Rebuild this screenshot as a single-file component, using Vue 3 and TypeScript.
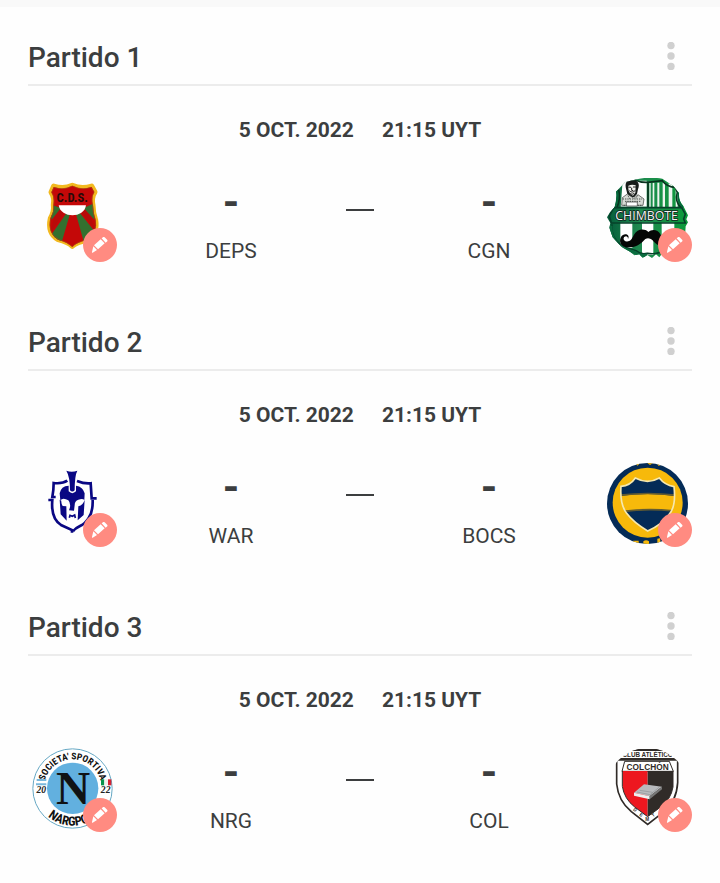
<script setup lang="ts">
interface Side {
  code: string
  crest: string
  score: string
}

interface Match {
  id: number
  date: string
  time: string
  home: Side
  away: Side
}

const matches: Match[] = [
  {
    id: 1,
    date: '5 OCT. 2022',
    time: '21:15 UYT',
    home: { code: 'DEPS', crest: 'deps', score: '-' },
    away: { code: 'CGN', crest: 'cgn', score: '-' },
  },
  {
    id: 2,
    date: '5 OCT. 2022',
    time: '21:15 UYT',
    home: { code: 'WAR', crest: 'war', score: '-' },
    away: { code: 'BOCS', crest: 'bocs', score: '-' },
  },
  {
    id: 3,
    date: '5 OCT. 2022',
    time: '21:15 UYT',
    home: { code: 'NRG', crest: 'nrg', score: '-' },
    away: { code: 'COL', crest: 'col', score: '-' },
  },
]

const sides = ['home', 'away'] as const
</script>

<template>
  <main class="fixtures">
    <section v-for="match in matches" :key="match.id" class="match">
      <header class="match-header">
        <h2 class="title">Partido {{ match.id }}</h2>
        <button type="button" class="menu" aria-label="Opciones">
          <svg viewBox="0 0 8 28" class="dots" aria-hidden="true">
            <circle cx="4" cy="3.5" r="3.7" />
            <circle cx="4" cy="14" r="3.7" />
            <circle cx="4" cy="24.5" r="3.7" />
          </svg>
        </button>
      </header>

      <p class="schedule">
        <time>{{ match.date }}</time>
        <time>{{ match.time }}</time>
      </p>

      <div class="board">
        <div v-for="side in sides" :key="side" class="crest-cell" :class="side">
          <svg v-if="match[side].crest === 'deps'" class="crest" viewBox="21 39 243 243" aria-hidden="true">
            <defs>
              <clipPath id="deps-shield">
                <path d="M86 66 Q115 76 142 62 Q170 76 200 66 L208 81 Q198 97 204 121 Q204 143 212 165 Q219 203 188 225 Q154 232 142 246 Q129 232 99 224 Q66 204 76 160 Q88 140 85 120 Q89 96 79 82Z" />
              </clipPath>
            </defs>
            <path fill="#f2b91f" stroke="#f2b91f" stroke-width="15" stroke-linejoin="round" d="M86 63 Q115 73 142 61 Q170 73 200 63 L210 81 Q199 97 204 121 Q204 143 212 165 Q219 203 188 225 Q154 232 142 244 Q129 232 99 224 Q66 204 76 160 Q88 140 85 120 Q89 96 78 82Z" />
            <g clip-path="url(#deps-shield)">
              <path fill="#c40808" d="M60 50h170v210H60z" />
              <path fill="#33702f" d="M70 116 L108 129 L80 164Z M204 116 L176 129 L208 164Z M123 146 L80 208 L85 240 L110 232 L134 150Z M153 148 L178 236 L218 210 L164 143Z" />
              <path fill="#8b1910" d="M88 155 L105 132 L118 140 L75 207Z M196 155 L180 132 L168 140 L214 200Z" opacity=".2" />
              <path fill="#fff" d="M101 121h82c-5 40-76 40-82 0z" />
            </g>
            <path fill="none" stroke="#a84a12" stroke-width="2" d="M87 67 Q115 77 142 63 Q170 77 198 67 L207 81 Q197 97 203 121 Q203 143 211 165 Q218 202 187 224 Q154 231 142 245 Q129 231 100 223 Q67 204 77 160 Q89 140 86 120 Q90 96 80 82Z" />
            <text class="deps-text" x="142" y="111" text-anchor="middle">C.D.S.</text>
          </svg>

          <svg v-else-if="match[side].crest === 'cgn'" class="crest" viewBox="36 39 243 243" aria-hidden="true">
            <defs>
              <clipPath id="cgn-shape">
                <path d="M119 44 Q158 34 202 41 L235 63 L252 84 Q250 106 265 123 L279 151 L274 163 L279 172 L272 184 L270 214 L250 246 L218 264 L211 273 L201 266 L193 277 L183 268 L171 279 L157 270 L143 279 L133 268 L118 271 L105 260 L80 246 L53 217 L43 188 L46 174 L36 157 L45 142 L59 126 Q66 100 63 80 L91 51Z" />
              </clipPath>
              <linearGradient id="cgn-green" x1="0" x2="1">
                <stop offset="0" stop-color="#055c3a" />
                <stop offset=".4" stop-color="#1f8a50" />
                <stop offset="1" stop-color="#0c9a3a" />
              </linearGradient>
            </defs>
            <g clip-path="url(#cgn-shape)">
              <path fill="url(#cgn-green)" d="M36 39h243v243H36z" />
              <path fill="#fff" d="M83 47h72v78H77z" />
              <path fill="#eef5ef" d="M163 53h4v74h-4zM173 53h5v74h-5zM187 53h6v74h-6zM203 53h7v74h-7zM221 55h11v72h-11zM242 73h6v54h-6z" />
              <path fill="none" stroke="#09331f" stroke-width="5" d="M118 44 Q137 53 158 52 L202 47 Q216 66 241 67 L247 82 Q239 110 258 128 M71 74 Q77 101 66 128 M159 53v74" />
              <path fill="none" stroke="#05683b" stroke-width="6" d="M66 75 Q71 106 58 130 M251 82 Q247 109 264 127" />
              <path fill="#fff" d="M76 173h36v76H76zM141 173h34v97h-34zM200 173h38v75h-38z" />
              <path fill="none" stroke="#06412a" stroke-width="5" d="M56 128H260L271 147L266 162L271 174H49L43 153ZM51 178 Q45 224 91 247L123 257 Q137 270 157 265 Q190 270 209 253 Q248 241 263 207" />
              <path fill="none" stroke="#0a6b3f" stroke-width="9" d="M48 182 Q44 228 88 252 L121 263 Q137 275 157 270" />
              <path fill="#171c1a" d="M94 75C86 48 101 43 113 46c15-2 23 11 16 27l-3 14-8 9h-13l-8-9z" />
              <path fill="#f2f2ee" d="M99 63q11-6 23-2l-1 22-7 9-8-5-5-10z" />
              <path fill="none" stroke="#222" stroke-width="3" d="M99 66l9 1m6-1h10M103 77q9 9 18-1M110 68v8l5 1M105 86q7 4 13-1" />
              <path fill="#d7dad5" stroke="#303532" stroke-width="2" d="M97 87l-15 11-2 23h64l3-19-18-13-12 11z" />
              <path fill="none" stroke="#48504a" stroke-width="3" stroke-dasharray="4 3" d="M83 102h58M90 109h46M86 121h54M99 92l5 9M127 91l-3 9" />
              <path fill="#fff" stroke="#333" stroke-width="2" d="M94 111h33v12H94z" />
              <text class="chimbote" x="155" y="164" text-anchor="middle">CHIMBOTE</text>
              <path fill="#050706" d="M99 229C84 233 81 214 94 214q6 2 5 8c8-14-13-21-21-6-9 17 4 32 24 31 23 0 35-10 49-25 8-5 14-2 21 3 13 16 28 25 48 19 19-5 12-27 0-26-10 1-8 13-3 15-13 3-15-14-20-24-9-18-28-17-37-8-13-13-34-8-43 8-6 10-7 17-18 20z" />
            </g>
          </svg>

          <svg v-else-if="match[side].crest === 'war'" class="crest" viewBox="21 39 243 243" aria-hidden="true">
            <g fill="none" stroke="#090783" stroke-width="8">
              <path d="M127 92 Q112 102 86 99 Q86 119 82 141 H92M156 93 Q178 102 197 100 L200 145 H215M70 150H82 Q77 205 108 225 L141 240 V248M203 150 Q204 184 192 202 Q182 220 165 228 Q150 235 144 244" />
            </g>
            <path fill="#090783" d="M124 62 Q140 68 157 62 Q149 76 149 121 Q142 128 135 121 Q135 80 124 62Z" />
            <path fill="#090783" d="M131 107 Q108 108 104 130 L106 151 Q114 142 130 151 Q137 158 135 172 L132 181 L147 182 L149 166 Q149 152 160 149 Q173 144 178 150 L179 130 Q174 110 153 107 L153 124 Q142 135 131 124Z" />
            <path fill="#090783" d="M104 149 L107 193 L125 212 L124 169 L113 168 Q108 160 109 152ZM179 149 Q175 164 160 169 L158 211 L176 195Z" />
            <path fill="none" stroke="#090783" stroke-width="5" d="M133 203 L135 196 L142 199 L149 195 L151 204" />
          </svg>

          <svg v-else-if="match[side].crest === 'bocs'" class="crest" viewBox="36 39 243 243" aria-hidden="true">
            <defs>
              <clipPath id="bocs-circle"><circle cx="157.500" cy="160.500" r="121.500" /></clipPath>
              <clipPath id="bocs-shield">
                <path d="M121 84 Q158 104 193 84 Q209 105 237 110 Q244 169 222 194 Q203 222 158 243 Q116 218 95 190 Q74 163 78 109 Q106 107 121 84Z" />
              </clipPath>
            </defs>
            <g clip-path="url(#bocs-circle)">
              <path fill="#042b57" d="M36 39h243v243H36z" />
              <circle cx="158" cy="158" r="105" fill="#f7b90b" />
              <path fill="#f7b90b" d="M117 39l11 8 7-8zM157 39l8 6 9-6zM185 39l6 9 10-5zM115 272h16v10h-20zM145 274q8-7 17 0v8h-17zM187 266l8-1 2 17h-10z" />
              <g clip-path="url(#bocs-shield)">
                <path fill="#042b57" d="M70 80h175v170H70z" />
                <path fill="#f7b90b" d="M70 139 Q158 125 246 139 V184 Q158 173 70 187Z" />
                <path fill="none" stroke="#625b32" stroke-width="5" d="M70 136 Q158 125 246 136M70 186 Q158 173 246 184" />
              </g>
              <path fill="none" stroke="#f6e8af" stroke-width="5" d="M121 84 Q158 104 193 84 Q209 105 237 110 Q244 169 222 194 Q203 222 158 243 Q116 218 95 190 Q74 163 78 109 Q106 107 121 84Z" />
            </g>
          </svg>

          <svg v-else-if="match[side].crest === 'nrg'" class="crest" viewBox="36 39 243 243" aria-hidden="true">
            <defs>
              <path id="nrg-top" d="M71 160 A87 87 0 0 1 245 160" />
              <path id="nrg-bottom" d="M46 160 A112 112 0 0 0 270 160" />
            </defs>
            <circle cx="157.500" cy="160.500" r="119" fill="#fff" stroke="#66a8c4" stroke-width="3" />
            <circle cx="158" cy="160" r="77" fill="#62b0df" />
            <text class="nrg-ring"><textPath href="#nrg-top" startOffset="50%" text-anchor="middle">SOCIETA' SPORTIVA</textPath></text>
            <text class="nrg-ring nrg-name"><textPath href="#nrg-bottom" startOffset="50%" text-anchor="middle">NARGPOLI</textPath></text>
            <text class="nrg-letter" x="159" y="206" text-anchor="middle">N</text>
            <text class="nrg-year" x="64" y="175" text-anchor="middle">20</text>
            <text class="nrg-year" x="257" y="175" text-anchor="middle">22</text>
            <path fill="#79b8dc" d="M50 132h29v6H50zM48 145h31v6H48z" />
            <path fill="#08934c" d="M243 133h10v18h-10z" />
            <path fill="#f0f0ed" d="M253 133h11v18h-11z" />
            <path fill="#d42231" d="M264 133h10v18h-10z" />
          </svg>

          <svg v-else class="crest" viewBox="36 39 243 243" aria-hidden="true">
            <defs>
              <clipPath id="col-outline"><circle cx="157.500" cy="160.500" r="121.500" /></clipPath>
              <clipPath id="col-shield"><path d="M82 108H234V156Q228 193 197 216L158 245L119 216Q88 192 82 154Z" /></clipPath>
            </defs>
            <g clip-path="url(#col-outline)">
              <path fill="#fff" stroke="#302b28" stroke-width="5" d="M91 45H226L248 70V143Q245 198 207 230L158 268L109 230Q70 198 65 147V70Z" />
              <path fill="#302b28" d="M80 42h160l-16 6H92zM61 69h188v8H61z" />
              <path fill="#fff" stroke="#302b28" stroke-width="3" d="M89 79H223L235 109H81Z" />
              <g clip-path="url(#col-shield)">
                <path fill="#ed171f" d="M81 108h77v140H81z" />
                <path fill="#302b28" d="M158 108h77v140h-77z" />
              </g>
              <path fill="none" stroke="#302b28" stroke-width="3" d="M82 108V154Q88 192 119 216L158 245L197 216Q228 193 234 156V108" />
              <text class="col-club" x="158" y="66" text-anchor="middle">CLUB ATLÉTICO</text>
              <text class="col-name" x="158" y="104" text-anchor="middle">COLCHÓN</text>
              <path fill="#b9bbbe" d="M117 173L147 148L201 155L164 184Z" />
              <path fill="#eee" d="M117 173L164 184V193L117 182Z" />
              <path fill="#777" d="M164 184L201 155V163L164 193Z" />
              <path fill="none" stroke="#8e9295" stroke-width="2" d="M126 171l39 8 27-22M134 166l39 6" />
              <text class="col-small" x="113" y="225" transform="rotate(40 113 225)">D</text>
              <text class="col-small" x="132" y="241" transform="rotate(35 132 241)">E</text>
              <text class="col-small" x="151" y="259">M</text>
              <text class="col-small" x="174" y="247" transform="rotate(-35 174 247)">T</text>
            </g>
          </svg>

          <button type="button" class="edit" :aria-label="`Editar ${match[side].code}`">
            <svg viewBox="174 189 102 102" class="pencil" aria-hidden="true">
              <path d="M207 241L227 223L239 235L219 253ZM230 220L235 216Q237 215 239 217L247 225Q248 227 247 229L242 233ZM205 244L216 255L203 263Q200 264 201 261Z" />
            </svg>
          </button>
        </div>

        <div v-for="side in sides" :key="`${side}-result`" class="result" :class="`${side}-result`">
          <span class="score">{{ match[side].score }}</span>
          <span class="code">{{ match[side].code }}</span>
        </div>
        <span class="separator"></span>
      </div>
    </section>
  </main>
</template>

<style>
body {
  margin: 0;
  background: #fefefe;
}
</style>

<style scoped>
.fixtures {
  padding: 0 28px;
  border-top: 7px solid #f9f9f9;
  color: #3c3e3f;
  font-family: Roboto, "Liberation Sans", sans-serif;
}

.match {
  padding: 20px 0 29px;
}

.match-header {
  display: flex;
  align-items: center;
  justify-content: space-between;
  height: 57px;
  border-bottom: 2px solid #ececec;
}

.title {
  margin: 0;
  padding-top: 4px;
  font-size: 28px;
  line-height: 36px;
  font-weight: 500;
}

.menu {
  display: flex;
  justify-content: center;
  width: 42px;
  padding: 0;
  border: 0;
  background: none;
  cursor: pointer;
}

.dots {
  width: 8px;
  height: 28px;
  fill: #d0d0d0;
}

.schedule {
  display: flex;
  justify-content: center;
  gap: 28px;
  margin: 32px 0 36px;
  font-size: 21px;
  line-height: 24px;
  font-weight: 700;
}

.board {
  display: grid;
  grid-template-columns: 89px 1fr 30px 1fr 89px;
  grid-template-areas: "home home-result separator away-result away";
  align-items: start;
}

.crest-cell {
  position: relative;
  height: 84px;
  padding-left: 4px;
}

.home {
  grid-area: home;
}

.away {
  grid-area: away;
}

.home-result {
  grid-area: home-result;
}

.away-result {
  grid-area: away-result;
}

.crest {
  display: block;
  width: 81px;
  height: 81px;
}

.edit {
  position: absolute;
  right: 0;
  bottom: 0;
  width: 34px;
  height: 34px;
  padding: 0;
  border: 0;
  border-radius: 50%;
  background: #ff8b81;
  cursor: pointer;
}

.pencil {
  display: block;
  width: 34px;
  height: 34px;
  fill: #fff;
}

.result {
  display: flex;
  flex-direction: column;
  align-items: center;
  gap: 11px;
}

.score {
  font-size: 42px;
  line-height: 50px;
  font-weight: 700;
}

.code {
  font-size: 21px;
  line-height: 24px;
}

.separator {
  grid-area: separator;
  justify-self: center;
  width: 28px;
  height: 2px;
  margin-top: 31px;
  background: #3c3e3f;
}

.deps-text {
  font: 700 38px "Liberation Sans Narrow", "Roboto Condensed", Roboto, sans-serif;
  fill: #240b08;
}

.chimbote {
  font: 400 37px "Open Sans", sans-serif;
  fill: #f2f2f2;
  stroke: #10251d;
  stroke-width: 5px;
  paint-order: stroke;
}

.nrg-ring {
  font: 700 28px "Liberation Sans Narrow", "Roboto Condensed", Roboto, sans-serif;
  fill: #111;
}

.nrg-name {
  font-size: 38px;
}

.nrg-letter {
  font: 700 142px "Liberation Serif", serif;
  fill: #101214;
}

.nrg-year {
  font: italic 700 29px "Liberation Serif", serif;
  fill: #222;
}

.col-club {
  font: 700 19px "Liberation Sans", sans-serif;
  fill: #302b28;
}

.col-name {
  font: 700 25px "Liberation Sans", sans-serif;
  fill: #302b28;
}

.col-small {
  font: 700 14px "Liberation Sans", sans-serif;
  fill: #302b28;
}
</style>
